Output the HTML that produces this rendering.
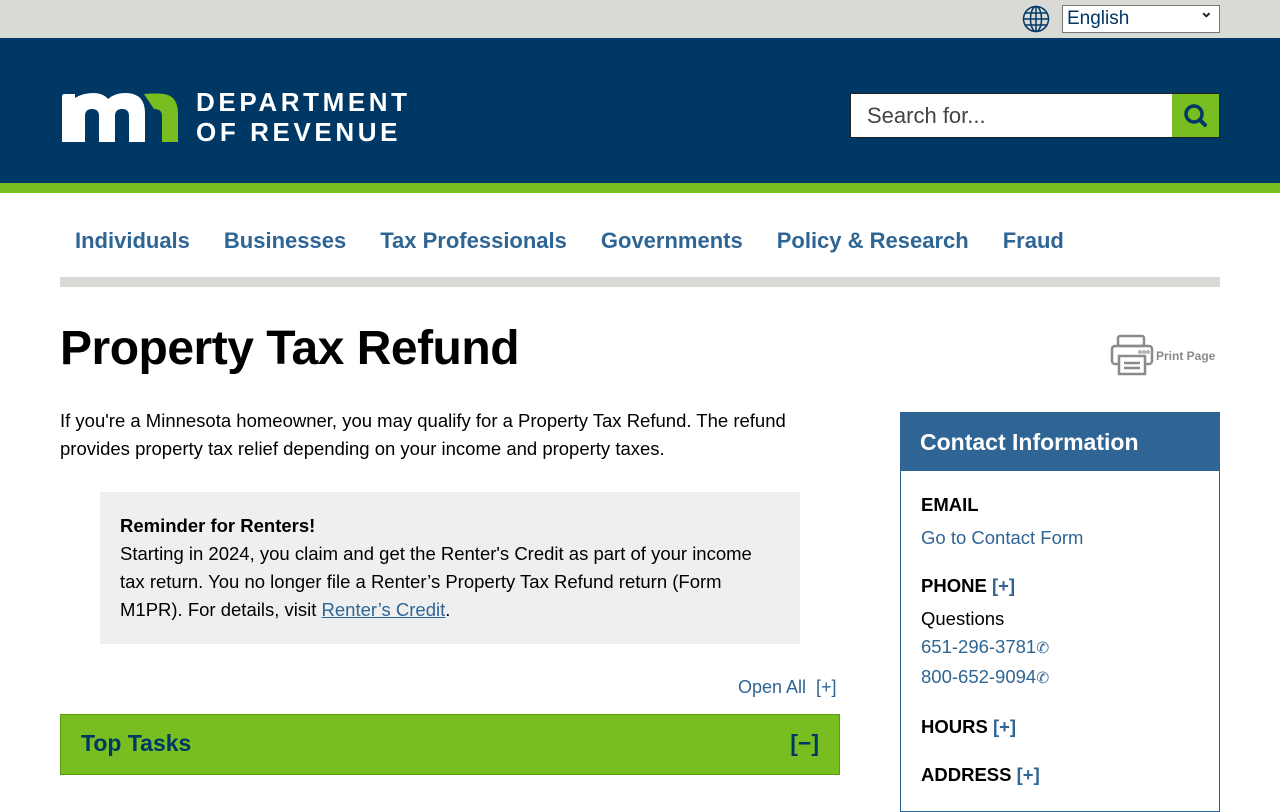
<!DOCTYPE html>
<html><head><meta charset="utf-8"><style>
*{margin:0;padding:0;box-sizing:border-box}
body{width:1280px;height:800px;overflow:hidden;font-family:"Liberation Sans",sans-serif;background:#fff;color:#000}
.top{height:38px;background:#d9d9d6;position:relative}
.sel{position:absolute;left:1062px;top:5px;width:158px;height:28px;border:1px solid #767676;background:#fff;font-size:19px;color:#003865;padding:2px 4px}
.sel:after{content:"⌄";position:absolute;right:6px;top:-4px;font-size:16px;font-weight:bold;color:#222}
.globe{position:absolute;left:1022px;top:5px}
.hdr{height:145px;background:#003865;position:relative}
.green{height:10px;background:#78be21}
.logo{position:absolute;left:60px;top:54px}
.dept{position:absolute;left:196px;top:49px;color:#fff;font-weight:bold;font-size:26px;letter-spacing:3.6px;line-height:30px}
.search{position:absolute;left:850px;top:55px;width:370px;height:45px;background:#fff;border:1px solid #222}
.search span{position:absolute;left:16px;top:9px;font-size:22px;color:#444}
.sbtn{position:absolute;right:0;top:0;width:47px;height:43px;background:#78be21}
nav{position:absolute;top:228px;left:75px;display:flex;gap:34px;font-weight:bold;font-size:22px;color:#2f6595}
.bar{position:absolute;left:60px;top:277px;width:1160px;height:10px;background:#d9d9d6}
h1{position:absolute;left:60px;top:321px;font-size:48px;font-weight:bold;letter-spacing:-0.5px}
.print{position:absolute;left:1110px;top:334px;color:#8a8a8a;font-size:12px;font-weight:bold}
.print span{position:absolute;left:46px;top:15px;white-space:nowrap}
p.intro{position:absolute;left:60px;top:407px;width:770px;font-size:18.5px;line-height:28px}
.note{position:absolute;left:100px;top:492px;width:700px;height:152px;background:#efefef;padding:20px 20px;font-size:18.5px;line-height:28px}
.note a{color:#2f6595}
.openall{position:absolute;left:738px;top:677px;color:#2f6595;font-size:18px}
.tasks{position:absolute;left:60px;top:714px;width:780px;height:61px;background:#78be21;border:1px solid #5a9a10;color:#003865;font-weight:bold;font-size:23px;padding:15px 20px}
.tasks b{position:absolute;right:20px;top:15px}
.side{position:absolute;left:900px;top:412px;width:320px;height:400px;border:1px solid #2f6595}
.side .h{background:#2f6595;color:#fff;font-weight:bold;font-size:23px;height:58px;padding:16px 19px}
.side .b{padding:20px 20px;font-size:18.5px;line-height:28px}
.side a,.pl{color:#2f6595}
.lab{font-weight:bold;margin-top:20px}
</style></head><body>
<div class="top">
<svg class="globe" width="28" height="28" viewBox="0 0 28 28" fill="none" stroke="#003865" stroke-width="1.5"><circle cx="14" cy="14" r="12.5"/><ellipse cx="14" cy="14" rx="5.5" ry="12.5"/><line x1="14" y1="1.5" x2="14" y2="26.5"/><line x1="1.5" y1="14" x2="26.5" y2="14"/><line x1="3.5" y1="8" x2="24.5" y2="8"/><line x1="3.5" y1="20" x2="24.5" y2="20"/></svg>
<div class="sel">English</div></div>
<div class="hdr">
<svg class="logo" width="120" height="50" viewBox="0 0 120 50"><path d="M2 50V4q0-2 3-2h10v4q8-5 18-5q10 0 15 6q7-6 17-6q20 0 20 20V50H69V24q0-7-7-7q-7 0-7 7V50H39V24q0-7-7-7q-7 0-7 7V50z" fill="#fff"/><path d="M84 2q11-1 20 0q14 2 14 20V50H102V24q0-7-8-7z" fill="#78be21"/></svg>
<div class="dept">DEPARTMENT<br>OF REVENUE</div>
<div class="search"><span>Search for...</span><div class="sbtn"><svg width="47" height="43" viewBox="0 0 47 43"><circle cx="22" cy="20" r="8" fill="none" stroke="#003865" stroke-width="3.5"/><line x1="28" y1="26" x2="33" y2="31" stroke="#003865" stroke-width="4" stroke-linecap="round"/></svg></div></div>
</div>
<div class="green"></div>
<nav><span>Individuals</span><span>Businesses</span><span>Tax Professionals</span><span>Governments</span><span>Policy &amp; Research</span><span>Fraud</span></nav>
<div class="bar"></div>
<h1>Property Tax Refund</h1>
<div class="print"><svg width="44" height="42" viewBox="0 0 44 42" fill="none" stroke="#8a8a8a" stroke-width="2.5"><rect x="8" y="2" width="26" height="10" rx="2"/><rect x="2" y="12" width="40" height="18" rx="3"/><rect x="9" y="22" width="26" height="18" fill="#fff"/><line x1="14" y1="29" x2="30" y2="29"/><line x1="14" y1="34" x2="30" y2="34"/><circle cx="30" cy="18" r=".5"/><circle cx="34" cy="18" r=".5"/><circle cx="38" cy="18" r=".5"/></svg><span>Print Page</span></div>
<p class="intro">If you're a Minnesota homeowner, you may qualify for a Property Tax Refund. The refund provides property tax relief depending on your income and property taxes.</p>
<div class="note"><b>Reminder for Renters!</b><br>Starting in 2024, you claim and get the Renter's Credit as part of your income tax return. You no longer file a Renter’s Property Tax Refund return (Form M1PR). For details, visit <a href="#"><u>Renter’s Credit</u></a>.</div>
<div class="openall">Open All &nbsp;[+]</div>
<div class="tasks">Top Tasks<b>[−]</b></div>
<div class="side"><div class="h">Contact Information</div><div class="b">
<div class="lab" style="margin-top:0">EMAIL</div><div style="margin-top:5px"><a>Go to Contact Form</a></div>
<div class="lab">PHONE <span class="pl">[+]</span></div><div style="margin-top:5px">Questions</div><div class="pl">651-296-3781<small>✆</small></div><div class="pl">800-652-9094<small>✆</small></div>
<div class="lab">HOURS <span class="pl">[+]</span></div>
<div class="lab">ADDRESS <span class="pl">[+]</span></div>
</div></div>
</body></html>
